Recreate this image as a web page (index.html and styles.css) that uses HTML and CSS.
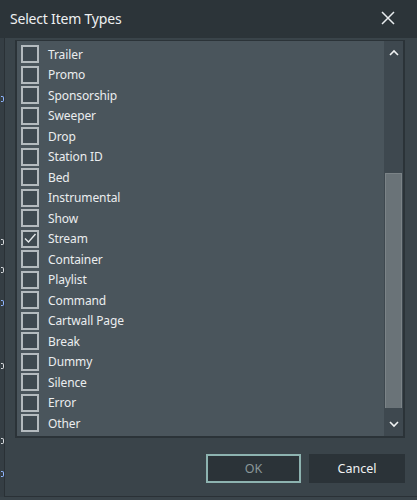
FILE: index.html
```html
<!DOCTYPE html>
<html>
<head>
<meta charset="utf-8">
<link rel="stylesheet" href="styles.css">
</head>
<body>
<div class="dialog">
  <div class="titlebar">
    <span class="title">Select Item Types</span>
    <svg class="close" width="14" height="14" viewBox="0 0 14 14"><path d="M1 1 L13 13 M13 1 L1 13" stroke="#e8ecee" stroke-width="1.5" fill="none"/></svg>
  </div>
  <div class="body">
    <div class="edge">
      <span class="frag blue f1"></span>
      <span class="frag f2"></span>
      <span class="frag f3"></span>
      <span class="frag blue f4"></span>
      <span class="frag f5"></span>
      <span class="frag f6"></span>
      <span class="frag blue f7"></span>
    </div>
    <div class="main">
      <div class="listbox">
        <ul class="list">
          <li><span class="cb"></span>Trailer</li>
          <li><span class="cb"></span>Promo</li>
          <li><span class="cb"></span>Sponsorship</li>
          <li><span class="cb"></span>Sweeper</li>
          <li><span class="cb"></span>Drop</li>
          <li><span class="cb"></span>Station ID</li>
          <li><span class="cb"></span>Bed</li>
          <li><span class="cb"></span>Instrumental</li>
          <li><span class="cb"></span>Show</li>
          <li><span class="cb checked"><svg width="15" height="15" viewBox="0 0 15 15"><path d="M2 7.5 L5.5 11 L12.5 3" stroke="#e4e8ea" stroke-width="1.4" fill="none"/></svg></span>Stream</li>
          <li><span class="cb"></span>Container</li>
          <li><span class="cb"></span>Playlist</li>
          <li><span class="cb"></span>Command</li>
          <li><span class="cb"></span>Cartwall Page</li>
          <li><span class="cb"></span>Break</li>
          <li><span class="cb"></span>Dummy</li>
          <li><span class="cb"></span>Silence</li>
          <li><span class="cb"></span>Error</li>
          <li><span class="cb"></span>Other</li>
        </ul>
        <div class="scrollbar">
          <svg class="arrow" width="12" height="8" viewBox="0 0 12 8"><path d="M2 6 L6 2 L10 6" stroke="#f0f2f3" stroke-width="1.6" fill="none"/></svg>
          <div class="track"><div class="thumb"></div></div>
          <svg class="arrow" width="12" height="8" viewBox="0 0 12 8"><path d="M2 2 L6 6 L10 2" stroke="#f0f2f3" stroke-width="1.6" fill="none"/></svg>
        </div>
      </div>
      <div class="buttons">
        <button class="btn ok">OK</button>
        <button class="btn cancel">Cancel</button>
      </div>
    </div>
  </div>
</div>
</body>
</html>
```

FILE: styles.css
```css
html, body {
  margin: 0;
  padding: 0;
  background: #3a444a;
}
body {
  width: 417px;
  height: 500px;
  overflow: hidden;
  font-family: "Noto Sans", "Open Sans", sans-serif;
}
.dialog {
  width: 417px;
  height: 500px;
  display: flex;
  flex-direction: column;
}
.titlebar {
  height: 38px;
  flex: 0 0 38px;
  background: #2c3439;
  display: flex;
  align-items: center;
  justify-content: space-between;
  padding: 0 22px 0 10px;
}
.title {
  color: #eef0f1;
  font-size: 14px;
  letter-spacing: -0.2px;
  margin-top: -2px;
}
.close {
  display: block;
  margin-top: -3px;
}
.body {
  flex: 1;
  display: flex;
}
.edge {
  width: 4px;
  flex: 0 0 4px;
  background: #353e44;
  border-right: 1px solid #2a3136;
  position: relative;
  overflow: hidden;
  margin-bottom: 3px;
}
.frag {
  position: absolute;
  right: 0;
  width: 3px;
  height: 6px;
  border-radius: 0 2px 2px 0;
  border: 1px solid #d8dcdf;
  border-left: 0;
  box-sizing: border-box;
}
.frag.blue { border-color: #8fb6ff; }
.f1 { top: 58px; }
.f2 { top: 201px; }
.f3 { top: 229px; }
.f4 { top: 262px; }
.f5 { top: 325px; }
.f6 { top: 400px; }
.f7 { top: 433px; }
.main {
  flex: 1;
  display: flex;
  flex-direction: column;
  padding: 2px 12px 0 10px;
  border-bottom: 1px solid #2a3136;
  margin-bottom: 3px;
}
.listbox {
  height: 395px;
  border: 2px solid #2b3338;
  border-top-width: 1px;
  display: flex;
  background: #4a555c;
}
.list {
  list-style: none;
  margin: 0;
  padding: 3px 0 0 0;
  flex: 1;
  overflow: hidden;
}
.list li {
  height: 20.5px;
  display: flex;
  align-items: center;
  color: #eaedef;
  font-size: 12px;
  letter-spacing: -0.1px;
}
.cb {
  width: 14px;
  height: 14px;
  border: 2px solid #b4bbbf;
  background: #3e4950;
  margin: 0 9px 0 4px;
  flex: 0 0 auto;
  display: flex;
  align-items: center;
  justify-content: center;
}
.cb svg {
  display: block;
  flex: 0 0 auto;
}
.scrollbar {
  width: 19px;
  flex: 0 0 19px;
  background: #3e484f;
  display: flex;
  flex-direction: column;
  align-items: center;
}
.arrow {
  display: block;
  flex: 0 0 auto;
  margin: 8px 0;
}
.track {
  flex: 1;
  width: 100%;
  display: flex;
  flex-direction: column;
  justify-content: flex-end;
  padding-bottom: 4px;
}
.thumb {
  height: 234px;
  margin: 0 1px 0 1px;
  background: #6a7378;
  border: 1px solid #7b8387;
  border-bottom: 0;
}
.buttons {
  display: flex;
  justify-content: flex-end;
  gap: 8px;
  margin-top: 16px;
}
.btn {
  width: 96px;
  height: 29px;
  font-family: "Noto Sans", "Open Sans", sans-serif;
  font-size: 12.5px;
  background: #2b3338;
  border: 2px solid #2b3338;
  color: #f0f2f3;
  padding: 0;
}
.ok {
  width: 95px;
  border-color: #8db3b0;
  color: #8a9799;
}
```
